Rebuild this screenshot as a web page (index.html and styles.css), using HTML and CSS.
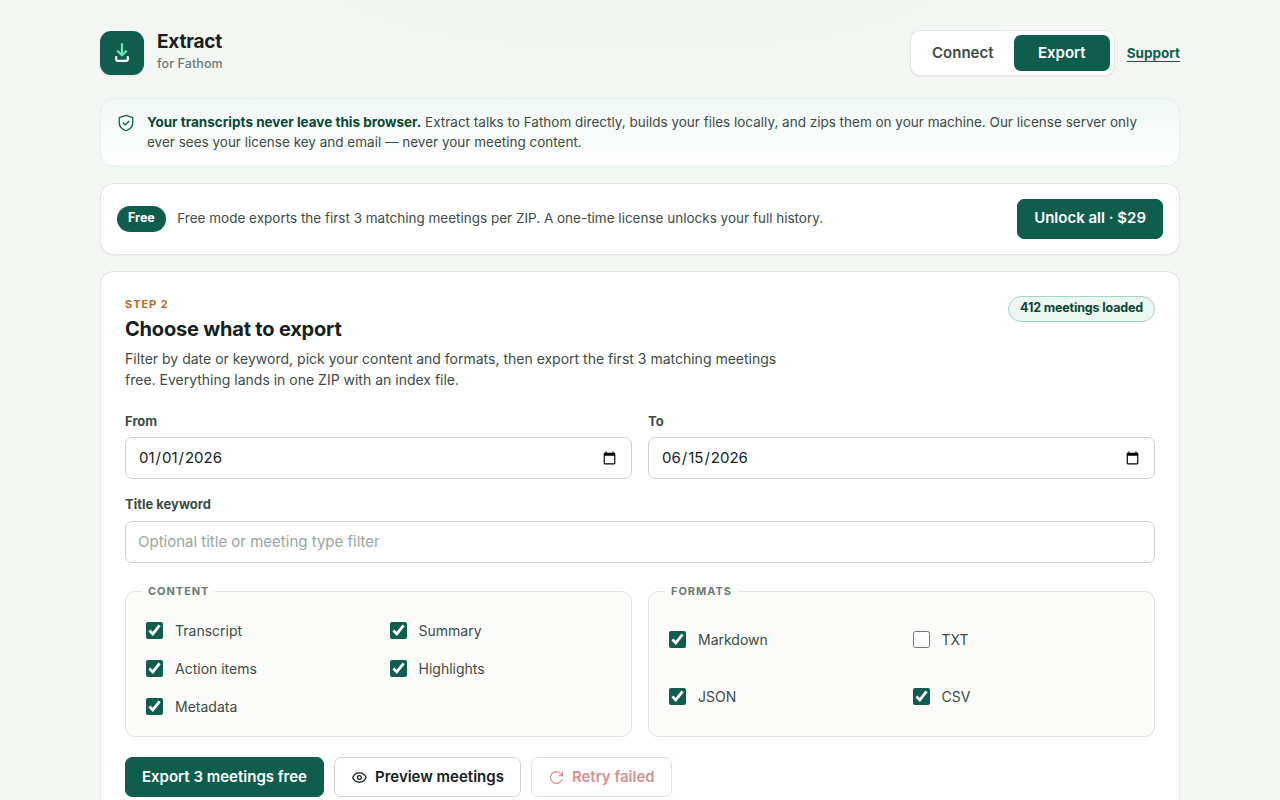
FILE: index.html
```html
<!DOCTYPE html>
<html lang="en-US">
<head>
<meta charset="utf-8">
<title>Extract for Fathom</title>
<link rel="stylesheet" href="styles.css">
</head>
<body>
<div class="shell">
  <header class="topbar">
    <div class="brand">
      <div class="brand-mark">
        <svg width="44" height="44" viewBox="0 0 44 44" fill="none" stroke-linecap="round" stroke-linejoin="round" stroke-width="2.2">
          <path d="M22 13v11M17.900 20.200l4.100 4.100 4.100-4.100" stroke="#6ee7b7"/>
          <path d="M16.200 26v2.500a1.300 1.300 0 0 0 1.300 1.300h9a1.300 1.300 0 0 0 1.300-1.300V26" stroke="#fff"/>
        </svg>
      </div>
      <div class="brand-text">
        <h1 class="brand-name">Extract</h1>
        <p class="brand-sub">for Fathom</p>
      </div>
    </div>
    <nav class="topnav">
      <div class="tabs">
        <button class="tab" type="button">Connect</button>
        <button class="tab tab-active" type="button">Export</button>
      </div>
      <a class="support" href="#">Support</a>
    </nav>
  </header>

  <section class="notice">
    <svg class="notice-icon" width="18" height="18" viewBox="0 0 24 24" fill="none" stroke="currentColor" stroke-width="1.7" stroke-linecap="round" stroke-linejoin="round">
      <path d="M12 1.800 21 4.800v6.700c0 5.200-3.800 8.800-9 10.800-5.200-2-9-5.600-9-10.800V4.800z"/>
      <path d="m8.300 12 2.600 2.600 4.900-4.900"/>
    </svg>
    <p class="notice-text"><strong>Your transcripts never leave this browser.</strong> Extract talks to Fathom directly, builds your files locally, and zips them on your machine. Our license server only ever sees your license key and email — never your meeting content.</p>
  </section>

  <section class="plan">
    <span class="plan-pill">Free</span>
    <p class="plan-text">Free mode exports the first 3 matching meetings per ZIP. A one-time license unlocks your full history.</p>
    <button class="btn btn-primary btn-unlock" type="button">Unlock all · $29</button>
  </section>

  <main class="panel">
    <div class="panel-head">
      <div class="panel-intro">
        <p class="eyebrow">Step 2</p>
        <h2 class="panel-title">Choose what to export</h2>
        <p class="panel-desc">Filter by date or keyword, pick your content and formats, then export the first 3 matching meetings free. Everything lands in one ZIP with an index file.</p>
      </div>
      <span class="count-pill">412 meetings loaded</span>
    </div>

    <div class="fields">
      <label class="field">From<input class="input" type="date" value="2026-01-01"></label>
      <label class="field">To<input class="input" type="date" value="2026-06-15"></label>
      <label class="field field-wide">Title keyword<input class="input" type="text" placeholder="Optional title or meeting type filter"></label>
    </div>

    <div class="groups">
      <fieldset class="group">
        <legend class="legend">Content</legend>
        <label class="check"><input type="checkbox" checked>Transcript</label>
        <label class="check"><input type="checkbox" checked>Summary</label>
        <label class="check"><input type="checkbox" checked>Action items</label>
        <label class="check"><input type="checkbox" checked>Highlights</label>
        <label class="check"><input type="checkbox" checked>Metadata</label>
      </fieldset>
      <fieldset class="group">
        <legend class="legend">Formats</legend>
        <label class="check"><input type="checkbox" checked>Markdown</label>
        <label class="check"><input type="checkbox">TXT</label>
        <label class="check"><input type="checkbox" checked>JSON</label>
        <label class="check"><input type="checkbox" checked>CSV</label>
      </fieldset>
    </div>

    <div class="actions">
      <button class="btn btn-primary" type="button">Export 3 meetings free</button>
      <button class="btn btn-outline" type="button">
        <svg width="16" height="16" viewBox="0 0 16 16" fill="none" stroke="currentColor" stroke-width="1.25" stroke-linecap="round" stroke-linejoin="round"><path d="M1.700 8.500c1.200-3 3.700-4.600 6.700-4.600s5.500 1.600 6.700 4.600c-1.200 3-3.700 4.600-6.700 4.600S2.900 11.500 1.700 8.500z"/><circle cx="8.400" cy="8.500" r="1.900"/></svg>
        Preview meetings
      </button>
      <button class="btn btn-danger" type="button" disabled>
        <svg width="16" height="16" viewBox="0 0 16 16" fill="none" stroke="currentColor" stroke-width="1.25" stroke-linecap="round" stroke-linejoin="round"><path d="M13.900 10.600A5.900 5.900 0 1 1 13.100 5L14.600 6.600M14.600 3.200v3.400h-3.400"/></svg>
        Retry failed
      </button>
    </div>
  </main>
</div>
</body>
</html>
```
FILE: styles.css
```css
* { box-sizing: border-box; }

html { height: 100%; overflow: hidden; }

body {
  margin: 0;
  height: 100%;
  overflow: hidden;
  background: radial-gradient(700px 160px at 50% -20px, #f0f6f2 0%, rgba(240, 246, 242, 0) 80%), #f4f6f3;
  color: #16211d;
  font-family: Inter, "Liberation Sans", sans-serif;
  font-size: 15px;
  line-height: 1.5;
}

h1, h2, p { margin: 0; }

button, input { font: inherit; }

.shell {
  display: flex;
  flex-direction: column;
  width: 1080px;
  height: 100%;
  margin: 0 auto;
  padding-top: 30px;
}

.topbar {
  display: flex;
  flex: none;
  align-items: center;
  justify-content: space-between;
  height: 46px;
  margin-bottom: 22px;
}

.brand { display: flex; align-items: center; gap: 13px; }

.brand-mark {
  width: 44px;
  height: 44px;
  border-radius: 11px;
  background: #0f5e4d;
  box-shadow: 0 1px 2px rgba(20, 35, 30, 0.08);
}

.brand-mark svg { display: block; }

.brand-text { padding-bottom: 2px; }

.brand-name {
  font-size: 19px;
  font-weight: 700;
  line-height: 24px;
  letter-spacing: -0.19px;
}

.brand-sub {
  color: #6b7a74;
  font-size: 12.5px;
  font-weight: 500;
  line-height: 20px;
  letter-spacing: 0.1px;
}

.topnav { display: flex; align-items: center; gap: 12px; }

.tabs {
  display: flex;
  gap: 3px;
  height: 46px;
  padding: 4px;
  border: 1px solid #e3e6e3;
  border-radius: 10px;
  background: #fff;
  box-shadow: 0 1px 2px rgba(20, 35, 30, 0.06);
}

.tab {
  padding: 0;
  width: 96px;
  border: 0;
  border-radius: 7px;
  background: none;
  color: #3d4b46;
  font-weight: 600;
}

.tab-active { background: #0f5e4d; color: #fff; }

.support {
  color: #0f5e4d;
  font-size: 13.5px;
  font-weight: 650;
  text-underline-offset: 3px;
}

.notice {
  display: flex;
  flex: none;
  gap: 12px;
  height: 69px;
  margin-bottom: 16px;
  padding: 13px 16px;
  border: 1px solid #e2f2ec;
  border-radius: 14px;
  background: linear-gradient(180deg, #f0f7f4, #fff);
}

.notice-icon { flex: none; margin-top: 2px; color: #0f5e4d; }

.notice-text {
  color: #3d4b46;
  font-size: 13.5px;
  line-height: 20px;
}

.notice-text strong { color: #0a4638; font-weight: 700; }

.plan {
  display: flex;
  flex: none;
  align-items: center;
  gap: 11.5px;
  height: 72px;
  margin-bottom: 16px;
  padding: 0 16px;
  border: 1px solid #e3e6e3;
  border-radius: 14px;
  background: #fff;
  box-shadow: 0 1px 2px rgba(20, 35, 30, 0.06);
}

.plan-pill {
  height: 26px;
  padding: 0 11px;
  border-radius: 13px;
  background: #0f5e4d;
  color: #fff;
  font-size: 12.5px;
  font-weight: 700;
  line-height: 24px;
}

.plan-text { flex: 1; color: #3d4b46; font-size: 13.5px; line-height: 20px; padding-bottom: 2px; }

.btn {
  display: inline-flex;
  align-items: center;
  justify-content: center;
  gap: 8px;
  height: 40px;
  padding: 0 16px;
  border: 1px solid transparent;
  border-radius: 7px;
  background: #fff;
  font-weight: 600;
  white-space: nowrap;
}

.btn-primary { background: #0f5e4d; border-color: #0f5e4d; color: #fff; }
.btn-unlock { padding-bottom: 2px; }
.btn-outline { border-color: #cfd3cd; color: #16211d; }
.btn-danger { border-color: #e6bdbb; color: #b3352f; opacity: 0.55; }

.panel {
  flex: 1;
  min-height: 0;
  padding: 24px 24px 0;
  border: 1px solid #e3e6e3;
  border-bottom: 0;
  border-radius: 14px 14px 0 0;
  background: #fff;
  box-shadow: 0 1px 2px rgba(20, 35, 30, 0.06);
}

.panel-head {
  display: flex;
  align-items: flex-start;
  justify-content: space-between;
  margin-bottom: 21.5px;
}

.panel-intro { width: 680px; }

.eyebrow {
  color: #b06a2c;
  font-size: 11px;
  font-weight: 700;
  line-height: 16px;
  letter-spacing: 0.95px;
  text-transform: uppercase;
}

.panel-title {
  margin: 4px 0 6px;
  font-size: 20px;
  font-weight: 700;
  line-height: 26px;
  letter-spacing: -0.2px;
}

.panel-desc { color: #3d4b46; font-size: 14px; line-height: 21px; }

.count-pill {
  height: 26px;
  padding: 0 11px;
  border: 1px solid #a7d5c3;
  border-radius: 13px;
  background: #ecf7f2;
  color: #0a4638;
  font-size: 12.5px;
  font-weight: 700;
  line-height: 22px;
  letter-spacing: -0.15px;
}

.fields {
  display: grid;
  grid-template-columns: 1fr 1fr;
  gap: 16px;
  margin-bottom: 20.5px;
}

.field {
  display: grid;
  gap: 6px;
  color: #3d4b46;
  font-size: 13px;
  font-weight: 650;
  line-height: 19.5px;
}

.field-wide { grid-column: 1 / -1; }

.input {
  width: 100%;
  height: 42px;
  padding: 0 12px;
  border: 1px solid #cfd3cd;
  border-radius: 7px;
  background: #fff;
  color: #16211d;
  font-size: 15px;
  font-weight: 400;
}

.input::placeholder { color: #9aa5a0; }

.groups {
  display: grid;
  grid-template-columns: 1fr 1fr;
  gap: 16px;
  margin-bottom: 20px;
}

.group {
  display: grid;
  grid-template-columns: 1fr 1fr;
  gap: 4px 14px;
  height: 154px;
  min-width: 0;
  margin: 0;
  padding: 13px 16px 12.6px;
  border: 1px solid #e1e5e1;
  border-radius: 10px;
  background: #fbfbf9;
}

.legend {
  padding: 0 6px;
  color: #6b7a74;
  font-size: 11px;
  font-weight: 700;
  line-height: 17px;
  letter-spacing: 0.95px;
  text-transform: uppercase;
}

.check {
  display: flex;
  align-items: center;
  gap: 12px;
  padding: 0 4px;
  color: #3d4b46;
  font-size: 14px;
}

.check input {
  width: 17px;
  height: 17px;
  margin: 0;
  accent-color: #0f5e4d;
}

.actions { display: flex; gap: 10px; }
```
